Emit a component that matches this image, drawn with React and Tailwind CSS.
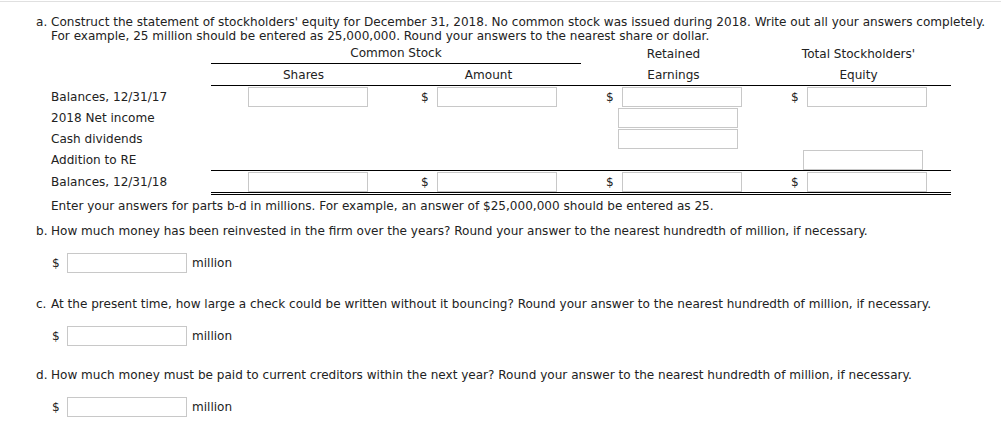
import React from "react";

const Inp = ({ w = "w-[120px]" }) => (
  <div className={`${w} h-[20px] border border-[#c8c8c8] bg-white`} />
);

const DollarCell = () => (
  <div className="w-[185px] h-full flex items-center">
    <span className="ml-[25px] w-[16px]">$</span>
    <Inp />
  </div>
);

const PlainCell = () => (
  <div className="w-[185px] h-full flex items-center">
    <div className="ml-[37px]">
      <Inp />
    </div>
  </div>
);

const Empty = () => <div className="w-[185px] h-full" />;

const Row = ({ label, children, cls = "" }) => (
  <div className={`flex h-[21px] items-center ${cls}`}>
    <div className="w-[160px]">{label}</div>
    {children}
  </div>
);

const AnswerRow = () => (
  <div className="flex items-center pl-[52px] h-[20px]">
    <span className="w-[15px]">$</span>
    <Inp />
    <span className="ml-[5px]">million</span>
  </div>
);

export default function App() {
  return (
    <div
      className="w-[1001px] h-[426px] bg-white text-[#222] text-[12.06px] leading-[14px] overflow-hidden"
      style={{ fontFamily: '"DejaVu Sans", Verdana, sans-serif' }}
    >
      <div className="mt-px h-px bg-[#e0e0e0]" />
      <div className="pt-[13px] pl-[36px] flex">
        <span className="w-[15px] shrink-0">a.</span>
        <div>
          Construct the statement of stockholders' equity for December 31, 2018. No common stock was issued during 2018. Write out all your answers completely.
          <br />
          For example, 25 million should be entered as 25,000,000. Round your answers to the nearest share or dollar.
        </div>
      </div>

      <div className="ml-[51px]">
        {/* header row 1 */}
        <div className="flex h-[21px]">
          <div className="w-[160px]" />
          <div className="w-[370px] flex items-center justify-center border-b border-black">Common Stock</div>
          <div className="w-[185px] flex items-center justify-center">Retained</div>
          <div className="w-[185px] flex items-center justify-center">Total Stockholders'</div>
        </div>
        {/* header row 2 */}
        <div className="flex h-[22px]">
          <div className="w-[160px]" />
          <div className="w-[740px] flex border-b border-black">
            <div className="w-[185px] flex items-center justify-center">Shares</div>
            <div className="w-[185px] flex items-center justify-center">Amount</div>
            <div className="w-[185px] flex items-center justify-center">Earnings</div>
            <div className="w-[185px] flex items-center justify-center">Equity</div>
          </div>
        </div>
        <Row label="Balances, 12/31/17">
          <PlainCell />
          <DollarCell />
          <DollarCell />
          <DollarCell />
        </Row>
        <Row label="2018 Net income">
          <Empty />
          <Empty />
          <PlainCell />
          <Empty />
        </Row>
        <Row label="Cash dividends">
          <Empty />
          <Empty />
          <PlainCell />
          <Empty />
        </Row>
        <div className="flex">
          <div className="w-[160px] h-[21px] flex items-center">Addition to RE</div>
          <div className="w-[740px] flex h-[21px] items-center border-b border-black box-content">
            <Empty />
            <Empty />
            <Empty />
            <PlainCell />
          </div>
        </div>
        <div className="flex">
          <div className="w-[160px] h-[21px] flex items-center">Balances, 12/31/18</div>
          <div className="w-[740px] flex h-[21px] items-center border-b-[3px] border-double border-black box-content">
            <PlainCell />
            <DollarCell />
            <DollarCell />
            <DollarCell />
          </div>
        </div>
      </div>

      <div className="mt-[4px] pl-[51px]">
        Enter your answers for parts b-d in millions. For example, an answer of $25,000,000 should be entered as 25.
      </div>

      <div className="mt-[11px] pl-[36px] flex">
        <span className="w-[15px] shrink-0">b.</span>
        <div>How much money has been reinvested in the firm over the years? Round your answer to the nearest hundredth of million, if necessary.</div>
      </div>
      <div className="mt-[15px]">
        <AnswerRow />
      </div>

      <div className="mt-[24px] pl-[36px] flex">
        <span className="w-[15px] shrink-0">c.</span>
        <div>At the present time, how large a check could be written without it bouncing? Round your answer to the nearest hundredth of million, if necessary.</div>
      </div>
      <div className="mt-[15px]">
        <AnswerRow />
      </div>

      <div className="mt-[22px] pl-[36px] flex">
        <span className="w-[15px] shrink-0">d.</span>
        <div>How much money must be paid to current creditors within the next year? Round your answer to the nearest hundredth of million, if necessary.</div>
      </div>
      <div className="mt-[15px]">
        <AnswerRow />
      </div>
    </div>
  );
}
